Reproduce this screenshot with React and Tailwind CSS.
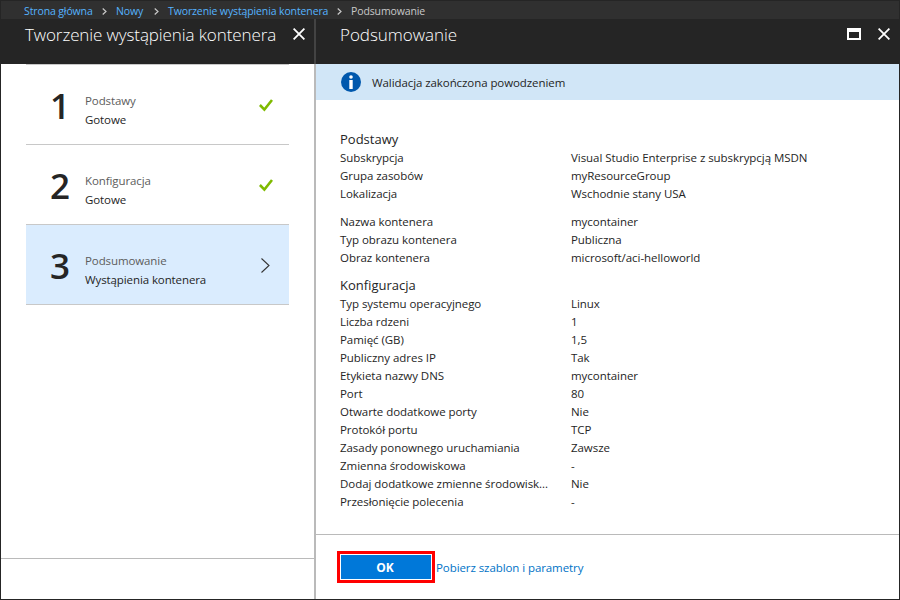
import React from "react";

const basics = [
  ["Subskrypcja", "Visual Studio Enterprise z subskrypcją MSDN"],
  ["Grupa zasobów", "myResourceGroup"],
  ["Lokalizacja", "Wschodnie stany USA"],
];

const container = [
  ["Nazwa kontenera", "mycontainer"],
  ["Typ obrazu kontenera", "Publiczna"],
  ["Obraz kontenera", "microsoft/aci-helloworld"],
];

const configuration = [
  ["Typ systemu operacyjnego", "Linux"],
  ["Liczba rdzeni", "1"],
  ["Pamięć (GB)", "1,5"],
  ["Publiczny adres IP", "Tak"],
  ["Etykieta nazwy DNS", "mycontainer"],
  ["Port", "80"],
  ["Otwarte dodatkowe porty", "Nie"],
  ["Protokół portu", "TCP"],
  ["Zasady ponownego uruchamiania", "Zawsze"],
  ["Zmienna środowiskowa", "-"],
  ["Dodaj dodatkowe zmienne środowisk...", "Nie"],
  ["Przesłonięcie polecenia", "-"],
];

function Separator() {
  return (
    <svg className="ml-[10px] mr-[9px] h-[7px] w-[5px] shrink-0" viewBox="0 0 5 7" fill="none" stroke="#c8c8c8" strokeWidth="1.2">
      <path d="M0.7 0.5 L4 3.5 L0.7 6.5" />
    </svg>
  );
}

function CloseIcon() {
  return (
    <svg className="h-3 w-3" viewBox="0 0 12 12" fill="none" stroke="#fff" strokeWidth="1.8">
      <path d="M0.6 0.6 L11.4 11.4 M11.4 0.6 L0.6 11.4" />
    </svg>
  );
}

function CheckIcon() {
  return (
    <svg className="h-[13px] w-[14px]" viewBox="0 0 14 13" fill="none" stroke="#7fba00" strokeWidth="2.6">
      <path d="M0.9 6 L5.4 10.6 L13 1" />
    </svg>
  );
}

function Step({ number, title, status, active }) {
  return (
    <div className={"flex h-20 border-b border-[#c8c8c8] " + (active ? "bg-[#daecfe]" : "")}>
      <div className="w-[59px] pl-6 pt-[17px] text-[35px] font-semibold leading-[48px] tracking-[-1px]">{number}</div>
      <div className="flex-1 pt-[26px] text-[11.5px] leading-[19px] tracking-[-0.1px]">
        <div className="text-[#5c5c5c]">{title}</div>
        <div>{status}</div>
      </div>
      <div className="w-[30px] pt-[34px]">
        {active ? (
          <svg className="ml-[2px] -mt-px h-[15px] w-[9px]" viewBox="0 0 9 15" fill="none" stroke="#333" strokeWidth="1.1">
            <path d="M0.5 0.5 L8 7.5 L0.5 14.5" />
          </svg>
        ) : (
          <CheckIcon />
        )}
      </div>
    </div>
  );
}

function Rows({ items }) {
  return items.map(([label, value]) => (
    <div key={label} className="flex h-[18px] text-[11.5px] leading-[18px] tracking-[-0.05px]">
      <div className="w-[231px] whitespace-nowrap">{label}</div>
      <div className="whitespace-nowrap">{value}</div>
    </div>
  ));
}

export default function App() {
  return (
    <div className="flex h-[600px] w-[900px] flex-col overflow-hidden border border-[#252525] bg-white font-['Open_Sans','Noto_Sans',sans-serif] text-[#252525]">
      <nav className="flex h-[18px] shrink-0 items-center whitespace-nowrap bg-[#303030] pl-[23px] pt-[2px] text-[10.5px] leading-4 tracking-[-0.12px] text-[#55b3ff]">
        <span className="w-[68px]">Strona główna</span>
        <Separator />
        <span className="w-[28px]">Nowy</span>
        <Separator />
        <span className="w-[159px]">Tworzenie wystąpienia kontenera</span>
        <Separator />
        <span className="text-[#c8c8c8]">Podsumowanie</span>
      </nav>
      <div className="flex min-h-0 flex-1">
        <section className="flex w-[313px] flex-col">
          <header className="flex h-[45px] shrink-0 justify-between bg-[#252525] pl-6 pr-[9px] text-white">
            <h1 className="whitespace-nowrap pt-1 text-[17px] font-light leading-6 tracking-[-0.1px]">Tworzenie wystąpienia kontenera</h1>
            <div className="pt-[9px]"><CloseIcon /></div>
          </header>
          <div className="ml-[25px] w-[263px] flex-1 border-t border-[#c8c8c8]">
            <Step number="1" title="Podstawy" status="Gotowe" />
            <Step number="2" title="Konfiguracja" status="Gotowe" />
            <Step number="3" title="Podsumowanie" status="Wystąpienia kontenera" active />
          </div>
          <footer className="h-[41px] border-t border-[#bababa]" />
        </section>
        <div className="flex w-[2px] flex-col bg-[#bababa]">
          <div className="h-[45px] bg-[#434343]" />
        </div>
        <section className="flex flex-1 flex-col">
          <header className="flex h-[45px] shrink-0 bg-[#252525] pl-6 pr-[9px] text-white">
            <h1 className="flex-1 pt-1 text-[17px] font-light leading-6 tracking-[-0.03px]">Podsumowanie</h1>
            <div className="mr-[17px] mt-[9px] h-3 w-[14px] border-2 border-t-4 border-white" />
            <div className="pt-[9px]"><CloseIcon /></div>
          </header>
          <div className="flex h-9 shrink-0 items-center bg-[#d1e6f7] pl-[25px] text-[11.5px]">
            <svg className="mr-[11px] h-5 w-5" viewBox="0 0 20 20">
              <circle cx="10" cy="10" r="10" fill="#0058ad" />
              <circle cx="10" cy="5" r="1.8" fill="#fff" />
              <rect x="8.3" y="8" width="3.4" height="9" fill="#fff" />
            </svg>
            <span className="pt-[2px] tracking-[-0.08px]">Walidacja zakończona powodzeniem</span>
          </div>
          <div className="flex-1 pl-6 pt-[29px]">
            <h2 className="h-5 text-[13px] leading-5">Podstawy</h2>
            <Rows items={basics} />
            <div className="h-[10px]" />
            <Rows items={container} />
            <h2 className="mt-2 h-5 text-[13px] leading-5">Konfiguracja</h2>
            <Rows items={configuration} />
          </div>
          <footer className="flex h-[65px] items-start border-t border-[#bababa] pl-[21px] pt-4">
            <button className="h-8 w-[98px] border-[3px] border-[#ff0000] bg-white p-px">
              <span className="block h-6 w-[90px] bg-[#0078d9] pr-[2px] text-center text-[12px] font-bold leading-[25px] text-white">OK</span>
            </button>
            <a className="ml-px pt-2 text-[11.5px] leading-[18px] tracking-[-0.08px] text-[#0072c6]">Pobierz szablon i parametry</a>
          </footer>
        </section>
      </div>
    </div>
  );
}
